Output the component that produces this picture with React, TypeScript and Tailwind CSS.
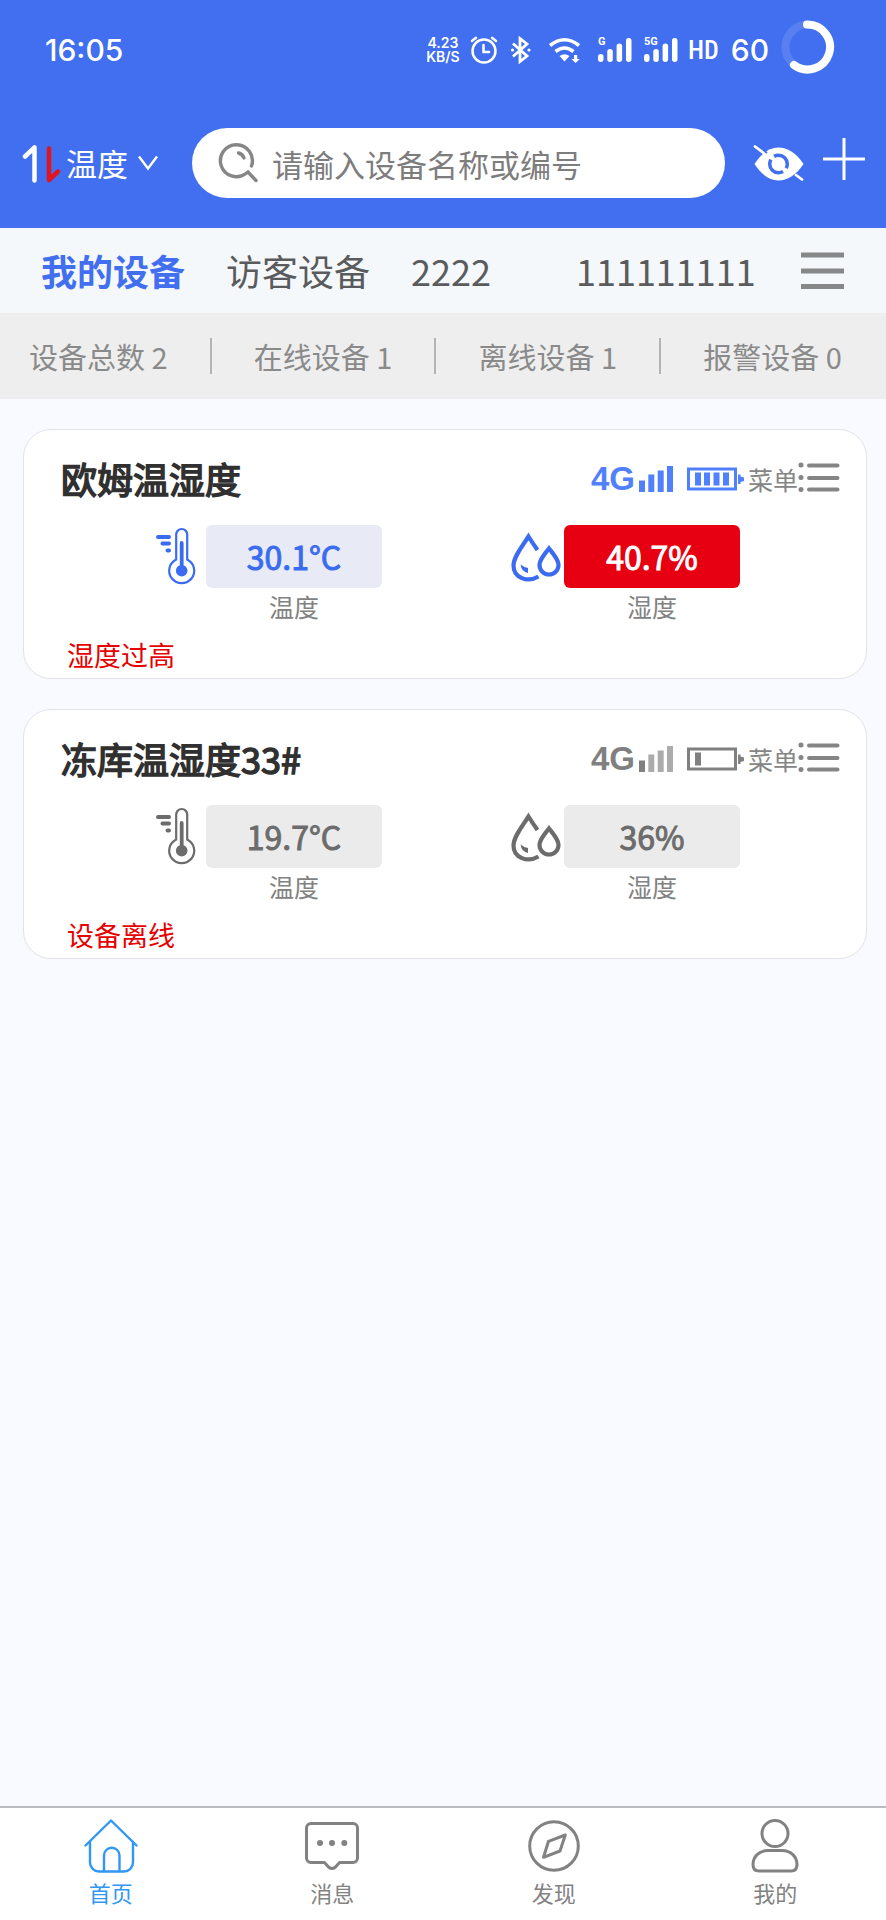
import type { ReactNode } from "react";
import { clsx } from "clsx";

type Device = {
  name: string;
  online: boolean;
  temperature: string;
  humidity: string;
  humidityAlarm?: boolean;
  message: string;
};

const devices: Device[] = [
  {
    name: "欧姆温湿度",
    online: true,
    temperature: "30.1°C",
    humidity: "40.7%",
    humidityAlarm: true,
    message: "湿度过高",
  },
  {
    name: "冻库温湿度33#",
    online: false,
    temperature: "19.7°C",
    humidity: "36%",
    message: "设备离线",
  },
];

const stats = [
  { label: "设备总数", value: 2 },
  { label: "在线设备", value: 1 },
  { label: "离线设备", value: 1 },
  { label: "报警设备", value: 0 },
];

const SignalBars = ({ label }: { label: string }) => (
  <div className="relative h-6 w-[34px]">
    <span className="absolute -top-0.5 left-0 font-['Roboto',sans-serif] text-[11px] leading-3 font-bold">
      {label}
    </span>
    <svg viewBox="0 0 34 24" className="h-6 w-[34px]" fill="currentColor">
      <rect x="0" y="16" width="5.5" height="8" rx="2.7" />
      <rect x="9.3" y="11" width="5.5" height="13" rx="2.7" />
      <rect x="18.6" y="5.5" width="5.5" height="18.5" rx="2.7" />
      <rect x="28" y="0" width="5.5" height="24" rx="2.7" />
    </svg>
  </div>
);

const StatusBar = () => (
  <div className="flex h-24 items-center pt-1 pr-[51px] pl-[45px] font-['Inter',sans-serif] text-white">
    <time className="text-[30px] leading-9 font-medium">16:05</time>
    <div className="ml-auto w-[38px] text-center text-[14px] leading-[14px] font-semibold">
      <div>4.23</div>
      <div>KB/S</div>
    </div>
    <svg
      viewBox="0 0 28 28"
      className="ml-2 size-7"
      fill="none"
      stroke="currentColor"
      strokeWidth="2.5"
      strokeLinecap="round"
    >
      <circle cx="14" cy="15" r="11.5" />
      <path d="M13.5 9v7h5.5M2 5l4-3.2M26 5l-4-3.2" />
    </svg>
    <svg
      viewBox="0 0 22 28"
      className="ml-3 h-7 w-[22px]"
      fill="none"
      stroke="currentColor"
      strokeWidth="2.8"
    >
      <path d="M3 7.5l14 12.5-7 5.5V2.5l7 5.5L3 20.5" />
      <circle cx="2.5" cy="14" r="1.6" fill="currentColor" stroke="none" />
      <circle cx="19" cy="14" r="1.6" fill="currentColor" stroke="none" />
    </svg>
    <svg
      viewBox="0 0 34 26"
      className="ml-4 h-[26px] w-[34px]"
      fill="none"
      stroke="currentColor"
      strokeWidth="3.6"
    >
      <path d="M2 8.5q14.5-11.5 29 0M7.5 14.5q9-7 18 0" />
      <path
        d="M11.5 19q5-3.6 10 0l-5 5.5zM26 18h3.2v4h2.6l-4.2 4-4.2-4H26z"
        fill="currentColor"
        stroke="none"
      />
    </svg>
    <div className="ml-4 flex gap-3">
      <SignalBars label="G" />
      <SignalBars label="5G" />
    </div>
    <span className="ml-2.5 font-['Roboto_Condensed','Open_Sans_Condensed','Roboto',sans-serif] text-[26px] leading-9 font-medium">
      HD
    </span>
    <span className="ml-3 text-[30px] leading-9 font-medium">60</span>
    <svg
      viewBox="0 0 54 54"
      className="mb-1.5 ml-3 size-[54px]"
      fill="none"
      stroke="currentColor"
      strokeWidth="8"
      strokeLinecap="round"
    >
      <circle cx="27" cy="27" r="22.5" strokeOpacity="0.12" />
      <path d="M26 4.5A22.5 22.5 0 1 1 13 45" />
    </svg>
  </div>
);

const SearchBar = () => (
  <div className="flex items-center pt-8 pr-[21px] pb-[30px] pl-[22px]">
    <button type="button" className="flex items-center text-white">
      <svg
        viewBox="0 0 40 40"
        className="mr-1 size-10"
        fill="none"
        strokeWidth="4.5"
        strokeLinecap="round"
        strokeLinejoin="round"
      >
        <path d="M3 13.5L12.5 4.5V37.5" stroke="#fff" />
        <path d="M27 5.5V37L36 28.5" stroke="#e0141e" />
      </svg>
      <span className="text-[31px] leading-10">温度</span>
      <svg
        viewBox="0 0 20 16"
        className="ml-2.5 h-4 w-5"
        fill="none"
        stroke="currentColor"
        strokeWidth="2.4"
      >
        <path d="M1 1.5l9 12 9-12" />
      </svg>
    </button>
    <label className="ml-[34px] flex h-[70px] min-w-0 flex-1 items-center rounded-full bg-white pl-[26px]">
      <svg
        viewBox="0 0 40 40"
        className="size-10 shrink-0"
        fill="none"
        stroke="#868686"
        strokeWidth="3.4"
        strokeLinecap="round"
      >
        <path d="M33.5 23A16 16 0 1 0 28 30.5L30 29L38 37.5" />
        <path d="M20.5 10q4 1 5.5 5" />
      </svg>
      <input
        type="search"
        aria-label="搜索设备"
        placeholder="请输入设备名称或编号"
        className="ml-3.5 h-full w-full min-w-0 bg-transparent text-[31px] outline-none placeholder:text-[#7d7d7d]"
      />
    </label>
    <button type="button" aria-label="隐藏设备" className="ml-7">
      <svg viewBox="0 0 52 40" className="h-10 w-[52px]" fill="none">
        <path
          d="M1.5 21C9 9.5 17 4.5 25.5 4.5S43 9.5 50.5 21C43 32.5 34 37.5 25.5 37.5S9 32.5 1.5 21z"
          fill="#fff"
        />
        <circle
          cx="25.5"
          cy="21"
          r="8.8"
          stroke="#416fef"
          strokeWidth="3.5"
          strokeDasharray="23 4.6"
          strokeDashoffset="-9"
        />
        <path d="M4 2.5l10 7.5M39.5 34.5l9.5 7" stroke="#416fef" strokeWidth="2" />
        <path
          d="M2 3.5l8.5 6.5M43 32l6 4.5"
          stroke="#fff"
          strokeWidth="2.8"
          strokeLinecap="round"
        />
      </svg>
    </button>
    <button type="button" aria-label="添加设备" className="mb-2 ml-[18px]">
      <svg
        viewBox="0 0 42 42"
        className="size-[42px]"
        stroke="#fff"
        strokeWidth="3"
      >
        <path d="M21 0v42M0 21h42" />
      </svg>
    </button>
  </div>
);

const GroupTabs = () => (
  <div className="flex h-[85px] items-center bg-[#f5f8fb] pr-[42px] pb-0.5 pl-[41px] text-[36px] leading-[48px] whitespace-nowrap text-[#595b5d]">
    <button type="button" className="font-bold text-[#416fef]">
      我的设备
    </button>
    <button type="button" className="ml-[41px]">
      访客设备
    </button>
    <button type="button" className="ml-[41px]">
      2222
    </button>
    <button type="button" className="ml-[85px]">
      111111111
    </button>
    <button type="button" aria-label="分组" className="ml-auto">
      <svg
        viewBox="0 0 43 38"
        className="h-[38px] w-[43px]"
        stroke="#858789"
        strokeWidth="5"
      >
        <path d="M0 4h43M0 20h43M0 35.5h43" />
      </svg>
    </button>
  </div>
);

const StatsBar = () => (
  <div className="flex h-[86px] items-center justify-between bg-[#eeeeee] pr-11 pl-[29px] text-[29px] leading-10 whitespace-nowrap text-[#8a8a8a]">
    {stats.map((stat, index) => (
      <div key={stat.label} className="contents">
        {index > 0 && <div className="h-9 w-0.5 bg-[#b4b4b4]" />}
        <span>
          {stat.label} {stat.value}
        </span>
      </div>
    ))}
  </div>
);

const ThermometerIcon = () => (
  <svg
    viewBox="0 0 54 62"
    className="h-[62px] w-[54px]"
    fill="none"
    stroke="currentColor"
    strokeLinecap="round"
  >
    <path d="M6 12h11M10.5 18.5h6.5M15.5 25.5h1.5" strokeWidth="4" />
    <path
      d="M24.2 34.5V9.5a5.5 5.5 0 0 1 11 0V34.5A12.5 12.5 0 1 1 24.2 34.5z"
      strokeWidth="2.2"
    />
    <path d="M29.7 18v26" strokeWidth="3.8" />
    <circle cx="29.7" cy="45.7" r="5.8" fill="currentColor" stroke="none" />
  </svg>
);

const DropsIcon = () => (
  <svg
    viewBox="0 0 54 62"
    className="h-[62px] w-[54px]"
    fill="none"
    stroke="currentColor"
    strokeWidth="4.2"
  >
    <path d="M27.5 25Q22.500 18 18.5 11.5C11.5 22.5 3.5 32 3.5 40.500 3.5 53 17.500 58 28.500 51.500" />
    <path d="M39 23.500C34 30 29.500 34.500 29.500 40a9.500 9.500 0 0 0 19 0C48.500 34.500 44 30 39 23.500z" />
    <path d="M10.500 39.500q3 2.500 7.500 3.500v5q-6.500-1-7.500-8.500z" fill="currentColor" stroke="none" />
  </svg>
);

type MetricProps = {
  icon: ReactNode;
  label: string;
  value: string;
  online: boolean;
  alarm?: boolean;
};

const Metric = ({ icon, label, value, online, alarm }: MetricProps) => (
  <div className="flex">
    <div className={online ? "text-[#3b6bf0]" : "text-[#6c6c6c]"}>{icon}</div>
    <div className="w-44 text-center">
      <div
        className={clsx(
          "rounded-md text-[32px] leading-[63px] [-webkit-text-stroke:1px]",
          alarm && "bg-[#e60012] text-white",
          !alarm && online && "bg-[#e8ebf5] text-[#3b6bf0]",
          !alarm && !online && "bg-[#ebebeb] text-[#6c6c6c]",
        )}
      >
        {value}
      </div>
      <div className="text-[25px] leading-9 text-[#828282]">{label}</div>
    </div>
  </div>
);

const DeviceCard = ({ device }: { device: Device }) => (
  <article className="rounded-[28px] border border-[#e1e3e8] bg-white pb-[3px]">
    <div className="flex h-[95px] items-center pr-[26px] pl-[37px]">
      <h2 className="text-[36px] leading-[48px] text-[#303030] [-webkit-text-stroke:1.5px]">
        {device.name}
      </h2>
      <div
        className={clsx(
          "mt-0.5 ml-auto flex items-center",
          device.online ? "text-[#5080fc]" : "text-[#808080]",
        )}
      >
        <span className="font-['Liberation_Sans',sans-serif] text-[33px] leading-10 font-bold">
          4G
        </span>
        <svg
          viewBox="0 0 34 26"
          className="ml-1 h-[26px] w-[34px]"
          fill="currentColor"
        >
          <rect y="14.5" width="6" height="11.5" />
          <g fillOpacity={device.online ? 1 : 0.65}>
            <rect x="9.3" y="8.5" width="6" height="17.5" />
            <rect x="18.7" y="4.5" width="6" height="21.5" />
            <rect x="28" width="6" height="26" />
          </g>
        </svg>
        <svg
          viewBox="0 0 57 24"
          className="mr-1 ml-3.5 h-6 w-[57px]"
          fill="currentColor"
        >
          <rect
            x="1.5"
            y="2"
            width="47"
            height="20"
            fill="none"
            stroke="currentColor"
            strokeWidth="3"
          />
          <path d="M51 7.5h2.5v2l3.5 1v3.5l-3.5 1v2H51z" />
          <rect x="8" y="5.5" width="6" height="13" />
          {device.online && <path d="M17 5.5h6v13h-6zM26.5 5.5h6v13h-6zM36 5.5h6v13h-6z" />}
        </svg>
        <button type="button" className="flex items-center text-[#858585]">
          <span className="text-[25px] leading-9">菜单</span>
          <svg
            viewBox="0 0 42 32"
            className="mb-1 h-8 w-[42px]"
            fill="none"
            stroke="currentColor"
            strokeWidth="4"
            strokeLinecap="round"
          >
            <path d="M11 4.5h28.5M11 17h28.5M11 28.5h28.5" />
            <path d="M3 4h.01M3 16.5h.01M3 28.5h.01" strokeWidth="5" />
          </svg>
        </button>
      </div>
    </div>
    <div className="flex justify-between pr-[126px] pl-32">
      <Metric
        icon={<ThermometerIcon />}
        label="温度"
        value={device.temperature}
        online={device.online}
      />
      <Metric
        icon={<DropsIcon />}
        label="湿度"
        value={device.humidity}
        online={device.online}
        alarm={device.humidityAlarm}
      />
    </div>
    <p className="mt-[11px] pl-[43px] text-[27px] leading-10 text-[#e60000]">
      {device.message}
    </p>
  </article>
);

const navItems = [
  {
    label: "首页",
    active: true,
    icon: (
      <>
        <path d="M1.5 27.5L27 2.5l25.5 25" />
        <path d="M6 24v20.5a9 9 0 0 0 9 9h25a9 9 0 0 0 9-9V24" />
        <path d="M20 53V37.5a7.7 7.7 0 0 1 15.5 0v15.5" />
      </>
    ),
  },
  {
    label: "消息",
    icon: (
      <>
        <path d="M6 5.5h42a4.5 4.5 0 0 1 4.5 4.5v30a4.5 4.5 0 0 1-4.5 4.5h-13.5l-4 4.5q-3.5 3-7 0l-4-4.5H6A4.5 4.5 0 0 1 1.5 40V10A4.5 4.5 0 0 1 6 5.5z" />
        <path d="M15 25h.01M27 25h.01M39.3 25h.01" strokeWidth="6" />
      </>
    ),
  },
  {
    label: "发现",
    icon: (
      <>
        <circle cx="27" cy="28" r="24.3" />
        <path d="M38.3 17L33 33 16.5 39.3 21.5 23.3z" />
      </>
    ),
  },
  {
    label: "我的",
    icon: (
      <>
        <circle cx="27" cy="15.5" r="13" />
        <path d="M20 32.5h14c9 0 15 6.5 15 14 0 4-2 6.5-6 6.5H11c-4 0-6-2.5-6-6.5 0-7.5 6-14 15-14z" />
      </>
    ),
  },
];

const BottomNav = () => (
  <nav className="mt-auto grid grid-cols-4 border-t-2 border-[#bcbcc0] bg-white pt-2.5 pb-2.5">
    {navItems.map((item) => (
      <a
        key={item.label}
        href="#"
        className={clsx(
          "flex flex-col items-center text-[22px] leading-9",
          item.active ? "text-[#3097f5]" : "text-[#828282]",
        )}
      >
        <svg
          viewBox="0 0 54 56"
          className="h-14 w-[54px]"
          fill="none"
          stroke="currentColor"
          strokeWidth={item.active ? 2.4 : 3}
          strokeLinecap="round"
          strokeLinejoin="round"
        >
          {item.icon}
        </svg>
        {item.label}
      </a>
    ))}
  </nav>
);

const App = () => {
  return (
    <div
      lang="zh-CN"
      className="flex min-h-screen flex-col bg-[#f8faff] font-['Noto_Sans_CJK_SC',sans-serif]"
    >
      <header className="bg-[#416fef]">
        <StatusBar />
        <SearchBar />
      </header>
      <GroupTabs />
      <StatsBar />
      <main className="flex flex-col gap-[30px] pt-[30px] pr-[19px] pb-8 pl-[23px]">
        {devices.map((device) => (
          <DeviceCard key={device.name} device={device} />
        ))}
      </main>
      <BottomNav />
    </div>
  );
};

export default App;
